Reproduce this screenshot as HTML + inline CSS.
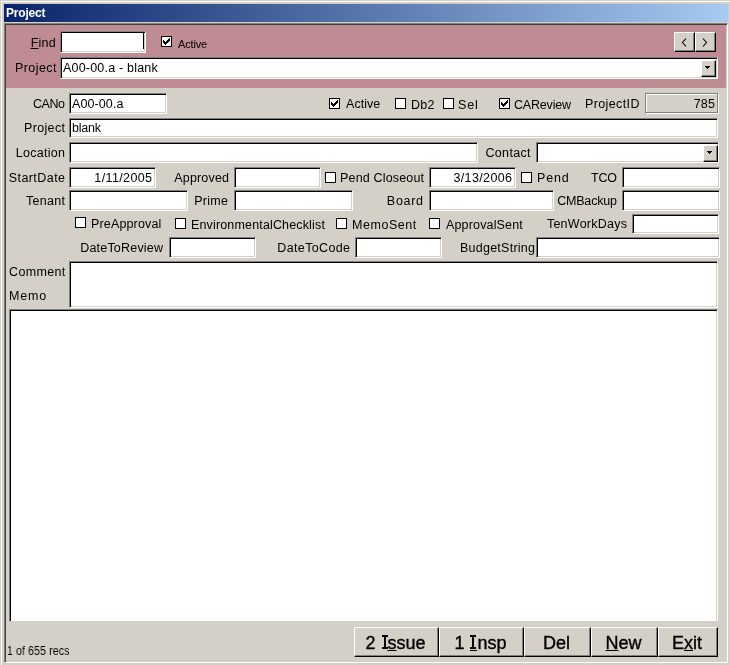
<!DOCTYPE html>
<html><head><meta charset="utf-8"><style>
html,body{margin:0;padding:0;width:730px;height:665px;overflow:hidden;background:#D4D0C8;position:relative;font-family:"Liberation Sans",sans-serif}
.t{position:absolute;line-height:1;white-space:nowrap;letter-spacing:0.25px}
.tb{position:absolute;box-sizing:border-box;border:1px solid;border-color:#808080 #fff #fff #808080;box-shadow:inset 1px 1px 0 #000, inset -1px -1px 0 #D4D0C8}
.cb{position:absolute;width:11px;height:11px;box-sizing:border-box;border:1px solid #000;background:#fff}
.btn{position:absolute;box-sizing:border-box;background:#D4D0C8;border:1px solid;border-color:#fff #000 #000 #fff;box-shadow:inset -1px -1px 0 #808080}
.arr{position:absolute;width:0;height:0;border-left:4px solid transparent;border-right:4px solid transparent;border-top:4px solid #000}
.nb{font-size:16px;line-height:18px;text-align:center}
.bb{font-size:18px;line-height:31px;text-align:center;padding-right:2px} .bb u{text-underline-offset:1px} .bb{-webkit-text-stroke:0.35px #000} .hid{color:transparent;-webkit-text-stroke-color:transparent;display:inline-block;text-decoration:none}
</style></head><body><div style="position:absolute;left:0;top:0;width:730px;height:665px;overflow:hidden;will-change:transform">
<div style="position:absolute;left:1px;top:1px;width:729px;height:664px;border-left:1px solid #fff;border-top:1px solid #fff;box-sizing:border-box"></div>
<div style="position:absolute;left:4px;top:4px;width:724px;height:18px;background:linear-gradient(to right,#0A246A,#A6CAF0)"></div>
<div class="t" style="left:6px;top:7.44px;font-size:12px;color:#fff;font-weight:bold;letter-spacing:-0.2px">Project</div>
<div style="position:absolute;left:4px;top:23px;width:724px;height:640px;box-sizing:border-box;border:1px solid;border-color:#808080 #fff #fff #808080;box-shadow:inset 1px 1px 0 #404040, inset -1px -1px 0 #D4D0C8"></div>
<div style="position:absolute;left:6px;top:25px;width:720px;height:63px;background:rgb(192,140,147)"></div>
<div class="t" style="right:674.05px;top:37.12px;font-size:12.5px;color:#000;"><u>F</u>ind</div>
<div class="tb" style="left:60px;top:31px;width:86px;height:22px;background:#fff"></div>
<div style="position:absolute;left:143px;top:33px;width:1px;height:16px;background:#000"></div>
<div class="cb" style="left:161px;top:36px"><svg width="9" height="9" style="position:absolute;left:1px;top:1px" shape-rendering="crispEdges"><rect x="6" y="0" width="1" height="1"/><rect x="5" y="1" width="2" height="1"/><rect x="0" y="2" width="1" height="1"/><rect x="4" y="2" width="3" height="1"/><rect x="0" y="3" width="2" height="1"/><rect x="3" y="3" width="3" height="1"/><rect x="0" y="4" width="5" height="1"/><rect x="1" y="5" width="3" height="1"/><rect x="2" y="6" width="1" height="1"/></svg></div>
<div class="t" style="left:178px;top:39.39px;font-size:11px;color:#000;letter-spacing:-0.15px;">Active</div>
<div class="t" style="left:15px;top:62.42px;font-size:12.5px;color:#000;letter-spacing:0.42px;">Project</div>
<div class="tb" style="left:60px;top:57px;width:658px;height:22px;background:#fff"></div>
<div class="btn" style="left:701px;top:60px;width:15px;height:17px"></div>
<svg style="position:absolute;left:705px;top:66px" width="5" height="3" shape-rendering="crispEdges"><rect x="0" y="0" width="5" height="1"/><rect x="1" y="1" width="3" height="1"/><rect x="2" y="2" width="1" height="1"/></svg>
<div class="btn" style="left:674px;top:32px;width:21px;height:20px"></div>
<div class="btn" style="left:695px;top:32px;width:21px;height:20px"></div>
<svg style="position:absolute;left:0;top:0" width="730" height="60"><path d="M686 38.5 L682.5 42.5 L686 46.5" stroke="#000" stroke-width="1.1" fill="none"/><path d="M703 38.5 L706.5 42.5 L703 46.5" stroke="#000" stroke-width="1.1" fill="none"/></svg>
<div class="t" style="left:63px;top:62.42px;font-size:12.5px;color:#000;letter-spacing:0.2px;">A00-00.a - blank</div>
<div class="t" style="right:665.42px;top:98.12px;font-size:12.5px;color:#000;letter-spacing:-0.42px;">CANo</div>
<div class="tb" style="left:69px;top:93px;width:98px;height:21px;background:#fff"></div>
<div class="t" style="left:72px;top:98.12px;font-size:12.5px;color:#000;letter-spacing:0.1px;">A00-00.a</div>
<div class="cb" style="left:329px;top:98px"><svg width="9" height="9" style="position:absolute;left:1px;top:1px" shape-rendering="crispEdges"><rect x="6" y="0" width="1" height="1"/><rect x="5" y="1" width="2" height="1"/><rect x="0" y="2" width="1" height="1"/><rect x="4" y="2" width="3" height="1"/><rect x="0" y="3" width="2" height="1"/><rect x="3" y="3" width="3" height="1"/><rect x="0" y="4" width="5" height="1"/><rect x="1" y="5" width="3" height="1"/><rect x="2" y="6" width="1" height="1"/></svg></div>
<div class="t" style="left:346px;top:98.12px;font-size:12.5px;color:#000;letter-spacing:0.05px;">Active</div>
<div class="cb" style="left:395px;top:98px"></div>
<div class="t" style="left:411px;top:99.12px;font-size:12.5px;color:#000;">Db2</div>
<div class="cb" style="left:443px;top:98px"></div>
<div class="t" style="left:458px;top:99.12px;font-size:12.5px;color:#000;letter-spacing:0.8px;">Sel</div>
<div class="cb" style="left:499px;top:98px"><svg width="9" height="9" style="position:absolute;left:1px;top:1px" shape-rendering="crispEdges"><rect x="6" y="0" width="1" height="1"/><rect x="5" y="1" width="2" height="1"/><rect x="0" y="2" width="1" height="1"/><rect x="4" y="2" width="3" height="1"/><rect x="0" y="3" width="2" height="1"/><rect x="3" y="3" width="3" height="1"/><rect x="0" y="4" width="5" height="1"/><rect x="1" y="5" width="3" height="1"/><rect x="2" y="6" width="1" height="1"/></svg></div>
<div class="t" style="left:514px;top:99.12px;font-size:12.5px;color:#000;letter-spacing:-0.18px;">CAReview</div>
<div class="t" style="left:585px;top:98.12px;font-size:12.5px;color:#000;letter-spacing:0.375px;">ProjectID</div>
<div style="position:absolute;left:646px;top:94px;width:73px;height:20px;box-sizing:border-box;border:1px solid #fff"></div>
<div style="position:absolute;left:645px;top:93px;width:73px;height:20px;box-sizing:border-box;border:1px solid #808080"></div>
<div class="t" style="right:14.75px;top:98.12px;font-size:12.5px;color:#000;">785</div>
<div class="t" style="right:664.64px;top:121.92px;font-size:12.5px;color:#000;letter-spacing:0.36px;">Project</div>
<div class="tb" style="left:69px;top:118px;width:649px;height:20px;background:#fff"></div>
<div class="t" style="left:72px;top:121.92px;font-size:12.5px;color:#000;letter-spacing:-0.2px;">blank</div>
<div class="t" style="right:664.70px;top:146.92px;font-size:12.5px;color:#000;letter-spacing:0.3px;">Location</div>
<div class="tb" style="left:69px;top:142px;width:409px;height:21px;background:#fff"></div>
<div class="t" style="right:199.18px;top:146.92px;font-size:12.5px;color:#000;letter-spacing:0.32px;">Contact</div>
<div class="tb" style="left:536px;top:142px;width:183px;height:21px;background:#fff"></div>
<div class="btn" style="left:703px;top:145px;width:15px;height:17px"></div>
<svg style="position:absolute;left:707px;top:151px" width="5" height="3" shape-rendering="crispEdges"><rect x="0" y="0" width="5" height="1"/><rect x="1" y="1" width="3" height="1"/><rect x="2" y="2" width="1" height="1"/></svg>
<div class="t" style="right:664.56px;top:171.92px;font-size:12.5px;color:#000;letter-spacing:0.44px;">StartDate</div>
<div class="tb" style="left:69px;top:167px;width:87px;height:21px;background:#fff"></div>
<div class="t" style="right:577.63px;top:171.92px;font-size:12.5px;color:#000;letter-spacing:0.37px;">1/11/2005</div>
<div class="t" style="right:500.82px;top:171.92px;font-size:12.5px;color:#000;letter-spacing:0.18px;">Approved</div>
<div class="tb" style="left:234px;top:167px;width:87px;height:21px;background:#fff"></div>
<div class="cb" style="left:325px;top:172px"></div>
<div class="t" style="left:340px;top:171.92px;font-size:12.5px;color:#000;letter-spacing:0.17px;">Pend Closeout</div>
<div class="tb" style="left:429px;top:167px;width:87px;height:21px;background:#fff"></div>
<div class="t" style="right:217.63px;top:171.92px;font-size:12.5px;color:#000;letter-spacing:0.37px;">3/13/2006</div>
<div class="cb" style="left:521px;top:172px"></div>
<div class="t" style="left:537px;top:171.92px;font-size:12.5px;color:#000;letter-spacing:0.8px;">Pend</div>
<div class="t" style="right:113.20px;top:171.92px;font-size:12.5px;color:#000;letter-spacing:-0.2px;">TCO</div>
<div class="tb" style="left:622px;top:167px;width:98px;height:21px;background:#fff"></div>
<div class="t" style="right:664.68px;top:195.42px;font-size:12.5px;color:#000;letter-spacing:0.32px;">Tenant</div>
<div class="tb" style="left:69px;top:190px;width:119px;height:21px;background:#fff"></div>
<div class="t" style="right:501.70px;top:195.42px;font-size:12.5px;color:#000;letter-spacing:0.3px;">Prime</div>
<div class="tb" style="left:234px;top:190px;width:119px;height:21px;background:#fff"></div>
<div class="t" style="right:306.30px;top:195.42px;font-size:12.5px;color:#000;letter-spacing:0.7px;">Board</div>
<div class="tb" style="left:429px;top:190px;width:125px;height:21px;background:#fff"></div>
<div class="t" style="right:113.18px;top:195.42px;font-size:12.5px;color:#000;letter-spacing:-0.18px;">CMBackup</div>
<div class="tb" style="left:622px;top:190px;width:98px;height:21px;background:#fff"></div>
<div class="cb" style="left:75px;top:217px"></div>
<div class="t" style="left:91px;top:218.42px;font-size:12.5px;color:#000;letter-spacing:0.15px;">PreApproval</div>
<div class="cb" style="left:175px;top:218px"></div>
<div class="t" style="left:191px;top:219.42px;font-size:12.5px;color:#000;letter-spacing:0.155px;">EnvironmentalChecklist</div>
<div class="cb" style="left:336px;top:218px"></div>
<div class="t" style="left:352px;top:219.42px;font-size:12.5px;color:#000;letter-spacing:0.54px;">MemoSent</div>
<div class="cb" style="left:429px;top:218px"></div>
<div class="t" style="left:446px;top:219.42px;font-size:12.5px;color:#000;letter-spacing:0.16px;">ApprovalSent</div>
<div class="t" style="right:102.75px;top:218.42px;font-size:12.5px;color:#000;">TenWorkDays</div>
<div class="tb" style="left:632px;top:214px;width:87px;height:20px;background:#fff"></div>
<div class="t" style="right:566.80px;top:242.42px;font-size:12.5px;color:#000;letter-spacing:0.2px;">DateToReview</div>
<div class="tb" style="left:169px;top:237px;width:87px;height:21px;background:#fff"></div>
<div class="t" style="right:379.64px;top:242.42px;font-size:12.5px;color:#000;letter-spacing:0.36px;">DateToCode</div>
<div class="tb" style="left:355px;top:237px;width:87px;height:21px;background:#fff"></div>
<div class="t" style="right:194.75px;top:242.42px;font-size:12.5px;color:#000;letter-spacing:0.25px;">BudgetString</div>
<div class="tb" style="left:536px;top:237px;width:184px;height:21px;background:#fff"></div>
<div class="t" style="left:9px;top:266.42px;font-size:12.5px;color:#000;letter-spacing:0.35px;">Comment</div>
<div class="t" style="left:9px;top:290.02px;font-size:12.5px;color:#000;letter-spacing:0.8px;">Memo</div>
<div class="tb" style="left:69px;top:261px;width:649px;height:47px;background:#fff"></div>
<div class="tb" style="left:9px;top:309px;width:709px;height:315px;background:#fff"></div>
<div style="position:absolute;left:8px;top:621px;width:712px;height:4px;background:#D4D0C8"></div>
<div class="t" style="left:7px;top:644.54px;font-size:12px;color:#000;transform:scaleX(0.86);transform-origin:0 0">1 of 655 recs</div>
<div class="btn bb" style="left:354px;top:627px;width:85px;height:30px">2 <span class=hid style='width:7px'>I</span><u>s</u>sue</div>
<div class="btn bb" style="left:439px;top:627px;width:85px;height:30px">1 <u class=hid style='width:8px'>I</u>nsp</div>
<div class="btn bb" style="left:524px;top:627px;width:67px;height:30px">Del</div>
<div class="btn bb" style="left:591px;top:627px;width:67px;height:30px"><u>N</u>ew</div>
<div class="btn bb" style="left:658px;top:627px;width:60px;height:30px">E<u>x</u>it</div>
<div style="position:absolute;left:382px;top:635px;width:6px;height:2px;background:#000"></div>
<div style="position:absolute;left:384px;top:635px;width:2px;height:14px;background:#000"></div>
<div style="position:absolute;left:382px;top:647px;width:6px;height:2px;background:#000"></div>
<div style="position:absolute;left:470px;top:635px;width:6px;height:2px;background:#000"></div>
<div style="position:absolute;left:472px;top:635px;width:2px;height:14px;background:#000"></div>
<div style="position:absolute;left:470px;top:647px;width:6px;height:2px;background:#000"></div>
<div style="position:absolute;left:470px;top:650px;width:7px;height:1px;background:#000"></div>
</div></body></html>
